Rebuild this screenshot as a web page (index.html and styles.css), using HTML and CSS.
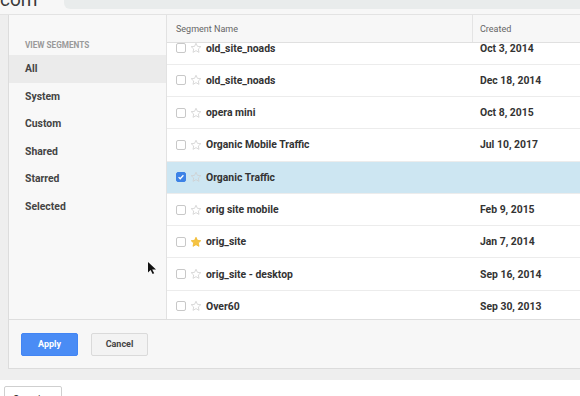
FILE: index.html
```html
<!DOCTYPE html>
<html lang="en">
<head>
    <meta charset="UTF-8">
    <meta name="viewport" content="width=device-width, initial-scale=1.0">
    <title>Segments</title>
    <link rel="stylesheet" href="styles.css">
</head>
<body>

    <div class="topbar">
        <span class="logo">com</span>
        <div class="search"></div>
    </div>

    <div class="backdrop">
        <div class="dialog">
            <div class="dialog-main">
                <div class="sidebar">
                    <div class="side-title">VIEW SEGMENTS</div>
                    <div class="side-item active">All</div>
                    <div class="side-item">System</div>
                    <div class="side-item">Custom</div>
                    <div class="side-item">Shared</div>
                    <div class="side-item">Starred</div>
                    <div class="side-item">Selected</div>
                </div>

                <div class="table">
                    <div class="thead">
                        <div class="col-name">Segment Name</div>
                        <div class="col-date">Created</div>
                    </div>
                    <div class="tbody">
                        <div class="rows">
                            <div class="row">
                                <div class="col-name"><span class="check"></span><svg class="star" viewBox="0 0 24 24"><path d="M12 2.5l2.9 6.2 6.7.7-5 4.6 1.4 6.7L12 17.3l-6 3.4 1.4-6.7-5-4.6 6.7-.7z"/></svg>old_site_noads</div>
                                <div class="col-date">Oct 3, 2014</div>
                            </div>
                            <div class="row">
                                <div class="col-name"><span class="check"></span><svg class="star" viewBox="0 0 24 24"><path d="M12 2.5l2.9 6.2 6.7.7-5 4.6 1.4 6.7L12 17.3l-6 3.4 1.4-6.7-5-4.6 6.7-.7z"/></svg>old_site_noads</div>
                                <div class="col-date">Dec 18, 2014</div>
                            </div>
                            <div class="row">
                                <div class="col-name"><span class="check"></span><svg class="star" viewBox="0 0 24 24"><path d="M12 2.5l2.9 6.2 6.7.7-5 4.6 1.4 6.7L12 17.3l-6 3.4 1.4-6.7-5-4.6 6.7-.7z"/></svg>opera mini</div>
                                <div class="col-date">Oct 8, 2015</div>
                            </div>
                            <div class="row">
                                <div class="col-name"><span class="check"></span><svg class="star" viewBox="0 0 24 24"><path d="M12 2.5l2.9 6.2 6.7.7-5 4.6 1.4 6.7L12 17.3l-6 3.4 1.4-6.7-5-4.6 6.7-.7z"/></svg>Organic Mobile Traffic</div>
                                <div class="col-date">Jul 10, 2017</div>
                            </div>
                            <div class="row selected">
                                <div class="col-name"><span class="check checked"><svg viewBox="0 0 10 10"><path d="M2 5.2l2 2 4-4.4"/></svg></span><svg class="star" viewBox="0 0 24 24"><path d="M12 2.5l2.9 6.2 6.7.7-5 4.6 1.4 6.7L12 17.3l-6 3.4 1.4-6.7-5-4.6 6.7-.7z"/></svg>Organic Traffic</div>
                                <div class="col-date"></div>
                            </div>
                            <div class="row">
                                <div class="col-name"><span class="check"></span><svg class="star" viewBox="0 0 24 24"><path d="M12 2.5l2.9 6.2 6.7.7-5 4.6 1.4 6.7L12 17.3l-6 3.4 1.4-6.7-5-4.6 6.7-.7z"/></svg>orig site mobile</div>
                                <div class="col-date">Feb 9, 2015</div>
                            </div>
                            <div class="row">
                                <div class="col-name"><span class="check"></span><svg class="star starred" viewBox="0 0 24 24"><path d="M12 2.5l2.9 6.2 6.7.7-5 4.6 1.4 6.7L12 17.3l-6 3.4 1.4-6.7-5-4.6 6.7-.7z"/></svg>orig_site</div>
                                <div class="col-date">Jan 7, 2014</div>
                            </div>
                            <div class="row">
                                <div class="col-name"><span class="check"></span><svg class="star" viewBox="0 0 24 24"><path d="M12 2.5l2.9 6.2 6.7.7-5 4.6 1.4 6.7L12 17.3l-6 3.4 1.4-6.7-5-4.6 6.7-.7z"/></svg>orig_site - desktop</div>
                                <div class="col-date">Sep 16, 2014</div>
                            </div>
                            <div class="row">
                                <div class="col-name"><span class="check"></span><svg class="star" viewBox="0 0 24 24"><path d="M12 2.5l2.9 6.2 6.7.7-5 4.6 1.4 6.7L12 17.3l-6 3.4 1.4-6.7-5-4.6 6.7-.7z"/></svg>Over60</div>
                                <div class="col-date">Sep 30, 2013</div>
                            </div>
                        </div>
                    </div>
                </div>
            </div>

            <div class="dialog-foot">
                <button class="btn btn-apply">Apply</button>
                <button class="btn btn-cancel">Cancel</button>
            </div>
        </div>

        <!-- mouse pointer from the recording -->
        <svg class="cursor" viewBox="0 0 10 14"><path d="M1 1v10.5l2.6-2.4 2 4 1.6-.8-2-3.9H9z"/></svg>
    </div>

    <div class="tabs">
        <button class="tab">Overview</button>
    </div>

</body>
</html>
```

FILE: styles.css
```css
body {
    margin: 0;
    font-family: Roboto, "Liberation Sans", Arial, sans-serif;
    background: #fff;
    color: #333;
    overflow: hidden;
    height: 396px;
}

.topbar {
    height: 14px;
    background: #f7f7f7;
    border-bottom: 1px solid #e3e3e3;
    display: flex;
    overflow: hidden;
}

.logo {
    width: 64px;
    font-size: 19px;
    line-height: 19px;
    margin-top: -10px;
    color: #3a3a3a;
}

.search {
    flex: 1;
    height: 9px;
    background: #e9ecec;
    border-radius: 0 0 0 6px;
}

.backdrop {
    position: relative;
    background: #eeeeee;
    padding: 0 0 11px 8px;
}

.dialog {
    background: #f7f7f7;
    border-left: 1px solid #dcdcdc;
    border-bottom: 1px solid #dcdcdc;
}

.dialog-main {
    display: flex;
    height: 304px;
    border-bottom: 1px solid #dedede;
}

/* left list */
.sidebar {
    width: 158px;
    background: #f8f8f8;
    border-right: 1px solid #e2e2e2;
    padding-top: 25px;
    box-sizing: border-box;
}

.side-title {
    font-size: 8.2px;
    font-weight: bold;
    color: #9a9a9a;
    padding-left: 16px;
    line-height: 10px;
    margin-bottom: 5px;
}

.side-item {
    font-size: 10.4px;
    font-weight: bold;
    color: #444;
    padding-left: 16px;
    height: 27.6px;
    line-height: 27.6px;
}

.side-item.active {
    background: #ebebeb;
}

/* segment table */
.table {
    flex: 1;
    display: flex;
    flex-direction: column;
    background: #fff;
    min-width: 0;
}

.thead {
    display: flex;
    height: 27px;
    background: #f7f7f7;
    border-bottom: 1px solid #e0e0e0;
    font-size: 9px;
    color: #666;
    align-items: center;
}

.thead .col-name {
    height: 100%;
    display: flex;
    align-items: center;
    border-right: 1px solid #e4e4e4;
}

.tbody {
    flex: 1;
    overflow: hidden;
}

.rows {
    margin-top: -10.6px;
}

.row {
    display: flex;
    align-items: center;
    height: 32.3px;
    box-sizing: border-box;
    border-bottom: 1px solid #ececec;
    font-size: 10.4px;
    font-weight: bold;
    color: #333;
}

.row.selected {
    background: #cde6f2;
}

.col-name {
    width: 306px;
    box-sizing: border-box;
    padding-left: 9px;
    display: flex;
    align-items: center;
    white-space: nowrap;
}

.col-date {
    padding-left: 7px;
    white-space: nowrap;
}

.check {
    width: 10px;
    height: 10px;
    box-sizing: border-box;
    border: 1px solid #c8c8c8;
    border-radius: 2px;
    background: #fff;
    margin-right: 4px;
    display: flex;
}

.check.checked {
    background: #3d82e6;
    border-color: #3d82e6;
}

.check svg {
    width: 8px;
    height: 8px;
    fill: none;
    stroke: #fff;
    stroke-width: 1.6;
}

.star {
    width: 12px;
    height: 12px;
    margin-right: 4px;
    fill: none;
    stroke: #cfcfcf;
    stroke-width: 1.6;
    stroke-linejoin: round;
}

.star.starred {
    fill: #f5c343;
    stroke: #f0b92d;
}

/* footer */
.dialog-foot {
    height: 48px;
    display: flex;
    align-items: center;
    padding-left: 12px;
    gap: 13px;
    background: #f7f7f7;
}

.btn {
    width: 57px;
    height: 23px;
    border-radius: 2px;
    font-family: Roboto, "Liberation Sans", Arial, sans-serif;
    font-size: 9px;
    font-weight: bold;
    cursor: pointer;
    padding: 0;
}

.btn-apply {
    background: #4a8cf5;
    border: 1px solid #4285f4;
    color: #fff;
}

.btn-cancel {
    background: #f3f3f3;
    border: 1px solid #dadada;
    color: #444;
}

.cursor {
    position: absolute;
    left: 147px;
    top: 246px;
    width: 10px;
    height: 14px;
    fill: #111;
}

/* bottom tabs */
.tabs {
    padding: 6px 0 0 4px;
}

.tab {
    width: 58px;
    height: 24px;
    background: #fff;
    border: 1px solid #cfcfcf;
    border-radius: 2px;
    font-family: Roboto, "Liberation Sans", Arial, sans-serif;
    font-size: 10px;
    color: #333;
    padding: 3px 0 0 0;
    vertical-align: top;
    line-height: 14px;
}
```
